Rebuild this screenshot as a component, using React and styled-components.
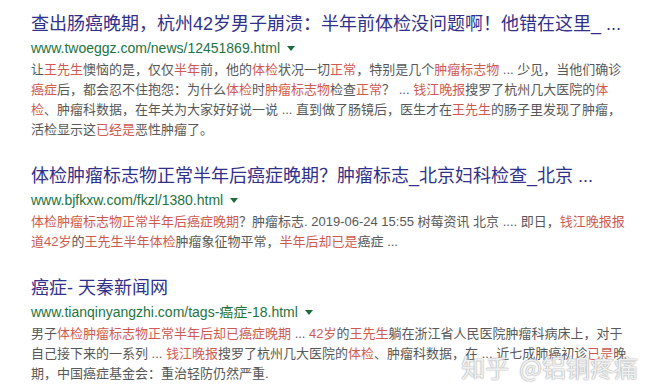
import React from "react";
import styled, { createGlobalStyle } from "styled-components";

const Global = createGlobalStyle`
  html, body { margin: 0; padding: 0; background: #fff; }
  body { font-family: "Liberation Sans", "Noto Sans CJK SC", sans-serif; }
`;

const Page = styled.div`
  position: relative;
  width: 652px;
  height: 391px;
  overflow: hidden;
  background: #fff;
  padding: 12px 0 0 31px;
  box-sizing: border-box;
  display: flex;
  flex-direction: column;
  gap: 24px;
`;

const Result = styled.div`
  display: flex;
  flex-direction: column;
`;

const Title = styled.a`
  font-size: 18px;
  line-height: 24px;
  color: #31308a;
  text-decoration: none;
  white-space: nowrap;
`;

const Url = styled.div`
  font-size: 14px;
  line-height: 24px;
  color: #24733f;
  white-space: nowrap;
  display: flex;
  align-items: center;
`;

const Caret = styled.span`
  display: inline-block;
  margin-left: 7px;
  width: 0;
  height: 0;
  border-left: 4px solid transparent;
  border-right: 4px solid transparent;
  border-top: 5px solid #1f6b3a;
`;

const Line = styled.div`
  font-size: 13px;
  line-height: 20px;
  color: #585858;
  white-space: nowrap;
`;

const Em = styled.span`
  color: #cf5a52;
`;

const Watermark = styled.div`
  position: absolute;
  right: 14px;
  bottom: 8px;
  display: flex;
  gap: 10px;
  font-family: "Noto Sans CJK SC", sans-serif;
  font-size: 24px;
  line-height: 32px;
  color: rgba(255, 255, 255, 0.85);
  text-shadow: 0 0 1px #9a9a9a, 0 0 2px #b5b5b5;
`;

export default function App() {
  return (
    <>
      <Global />
      <Page>
        <Result>
          <Title>查出肠癌晚期，杭州42岁男子崩溃：半年前体检没问题啊！他错在这里_ ...</Title>
          <Url>www.twoeggz.com/news/12451869.html<Caret /></Url>
          <Line>
            让<Em>王先生</Em>懊恼的是，仅仅<Em>半年</Em>前，他的<Em>体检</Em>状况一切<Em>正常</Em>，特别是几个<Em>肿瘤标志物</Em> ... 少见，当他们确诊
          </Line>
          <Line>
            <Em>癌症</Em>后，都会忍不住抱怨：为什么<Em>体检</Em>时<Em>肿瘤标志物</Em>检查<Em>正常</Em>？ ... <Em>钱江晚报</Em>搜罗了杭州几大医院的<Em>体</Em>
          </Line>
          <Line>
            <Em>检</Em>、肿瘤科数据，在年关为大家好好说一说 ... 直到做了肠镜后，医生才在<Em>王先生</Em>的肠子里发现了肿瘤，
          </Line>
          <Line>
            活检显示这<Em>已经是</Em>恶性肿瘤了。
          </Line>
        </Result>
        <Result>
          <Title>体检肿瘤标志物正常半年后癌症晚期？肿瘤标志_北京妇科检查_北京 ...</Title>
          <Url>www.bjfkxw.com/fkzl/1380.html<Caret /></Url>
          <Line>
            <Em>体检肿瘤标志物正常半年后癌症晚期</Em>？肿瘤标志. 2019-06-24 15:55 树莓资讯 北京 .... 即日，<Em>钱江晚报报</Em>
          </Line>
          <Line>
            <Em>道42岁</Em>的<Em>王先生半年体检</Em>肿瘤象征物平常，<Em>半年后却已是</Em>癌症 ...
          </Line>
        </Result>
        <Result>
          <Title>癌症- 天秦新闻网</Title>
          <Url>www.tianqinyangzhi.com/tags-癌症-18.html<Caret /></Url>
          <Line>
            男子<Em>体检肿瘤标志物正常半年后却已癌症晚期</Em> ... <Em>42岁</Em>的<Em>王先生</Em>躺在浙江省人民医院肿瘤科病床上，对于
          </Line>
          <Line>
            自己接下来的一系列 ... <Em>钱江晚报</Em>搜罗了杭州几大医院的<Em>体检</Em>、肿瘤科数据，在 ... 近七成肺癌初诊<Em>已是</Em>晚
          </Line>
          <Line>期，中国癌症基金会：重治轻防仍然严重.</Line>
        </Result>
        <Watermark>
          <span>知乎</span>
          <span>@铝铜疼痛</span>
        </Watermark>
      </Page>
    </>
  );
}
